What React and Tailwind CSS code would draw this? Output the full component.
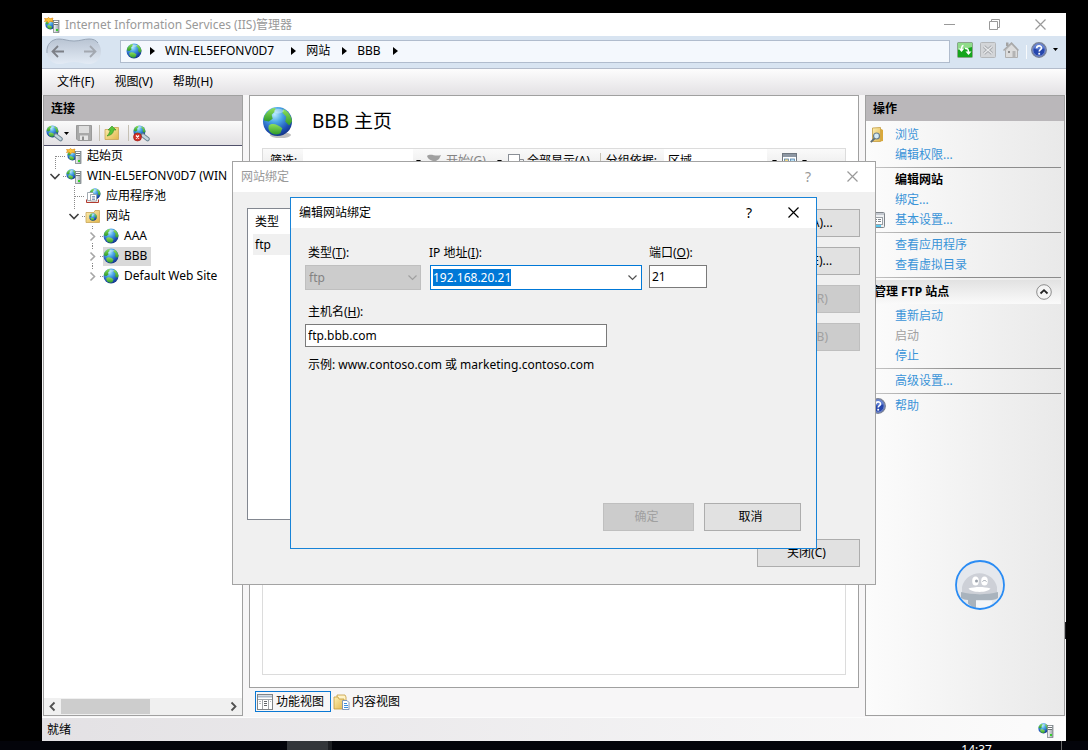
import React, { useEffect, useRef } from 'react';

const Gradients = () => (
  <svg width="0" height="0" className="absolute" aria-hidden="true">
    <defs>
      <radialGradient id="ocean" cx="0.4" cy="0.25" r="0.8">
        <stop offset="0" stopColor="#b8ecff" />
        <stop offset="0.35" stopColor="#4aa5e6" />
        <stop offset="0.75" stopColor="#1d4fb4" />
        <stop offset="1" stopColor="#12307e" />
      </radialGradient>
      <linearGradient id="land" x1="0" y1="0" x2="0" y2="1">
        <stop offset="0" stopColor="#8fe05c" />
        <stop offset="1" stopColor="#2f9a2a" />
      </linearGradient>
      <linearGradient id="folder" x1="0" y1="0" x2="1" y2="1">
        <stop offset="0" stopColor="#fdf0b4" />
        <stop offset="1" stopColor="#e2b64c" />
      </linearGradient>
      <linearGradient id="tower" x1="0" y1="0" x2="1" y2="0">
        <stop offset="0" stopColor="#f4f6f7" />
        <stop offset="1" stopColor="#9ba3a8" />
      </linearGradient>
      <linearGradient id="pill" x1="0" y1="0" x2="0" y2="1">
        <stop offset="0" stopColor="#b9c4d3" />
        <stop offset="1" stopColor="#e3ebf5" />
      </linearGradient>
    </defs>
  </svg>
);

const GlobeShape = () => (
  <>
    <circle cx="16" cy="16" r="15" fill="url(#ocean)" />
    <path d="M4 8C7 4 10 2 14 2l-1 4-3 3 1 4-4 3-5-1c0-3 0-5 2-7z" fill="url(#land)" />
    <path d="M22 3c5 2 9 8 9 13l-3 4-4-4 1-5-4-4z" fill="url(#land)" />
    <path d="M7 20c4-3 9-1 14 3l-2 5c-3 2-6 2-9 0-3-2-4-5-3-8z" fill="url(#land)" />
    <path d="M12 5c3-3 8-3 11 0-3 3-8 4-11 0z" fill="#fff" opacity="0.35" />
  </>
);

const Globe = ({ size = 16 }) => (
  <svg width={size} height={size} viewBox="0 0 32 32" className="shrink-0">
    <GlobeShape />
  </svg>
);

const BigGlobe = () => (
  <svg width="31" height="33" viewBox="0 0 32 34" className="shrink-0">
    <ellipse cx="19" cy="30" rx="11" ry="3" fill="#000" opacity="0.25" />
    <GlobeShape />
  </svg>
);

const ServerGlobe = ({ star }) => (
  <svg width="16" height="16" viewBox="0 0 16 16" className="shrink-0">
    <g transform={star ? 'translate(1 2) scale(0.34)' : 'translate(0 1) scale(0.34)'}>
      <GlobeShape />
    </g>
    {star && (
      <path d="M0.500 1.500l2.500 0.300L4.500 0.500l1.500 1.300L9 1l-0.800 2L9 5l-3-0.800L4.500 6 3.200 4 0.500 4.500l1-1.500z" fill="#fcc53a" stroke="#e08a12" strokeWidth="0.7" />
    )}
    <rect x="9.500" y="3.500" width="5.500" height="12" fill="url(#tower)" stroke="#70787d" strokeWidth="0.7" />
    <path d="M10 5.500h4M10 7.500h4" stroke="#6c7478" />
    <path d="M10 4.500h4M10 6.500h4" stroke="#fff" />
    <rect x="12" y="12" width="2" height="2" fill="#35d02c" />
  </svg>
);

const Folder = ({ children }) => (
  <svg width="16" height="16" viewBox="0 0 16 16" className="shrink-0">
    <path d="M1 4.500h8l1-2h4.500v12H1z" fill="url(#folder)" stroke="#c9a556" strokeWidth="0.8" />
    {children}
  </svg>
);

const SiteFolder = () => (
  <Folder>
    <g transform="translate(4 5) scale(0.25)">
      <GlobeShape />
    </g>
  </Folder>
);

const UpFolder = () => (
  <Folder>
    <path d="M3 11c2-2 3-4 3-6H4L8 1l4 4H9.500c0 3-2 5-6.500 6z" fill="#57c33a" stroke="#2b8d1c" strokeWidth="0.6" />
  </Folder>
);

const AppPool = () => (
  <svg width="16" height="16" viewBox="0 0 16 16" className="shrink-0">
    <g transform="translate(4 0) scale(0.37)">
      <GlobeShape />
    </g>
    <path d="M1.500 11.500v3h12v-3" fill="#f6e9e6" stroke="#b23a2e" />
    <path d="M2.500 4.500h5l1 1v7h-6z" fill="#fff" stroke="#8b96a0" strokeWidth="0.8" />
    <path d="M5.500 6.500h6v6.500h-6z" fill="#fff" stroke="#8b96a0" strokeWidth="0.8" />
    <path d="M7 8.500h3M7 10h3M7 11.500h3" stroke="#6f83ad" strokeWidth="0.8" />
  </svg>
);

const ConnectIcon = ({ stop }) => (
  <svg width="17" height="17" viewBox="0 0 17 17" className="shrink-0">
    <g transform="scale(0.4)">
      <GlobeShape />
    </g>
    <path d="M10 10.500l4.500 3.500" stroke="#6f8795" strokeWidth="4.500" strokeLinecap="round" />
    <path d="M10 10.500l4.500 3.500" stroke="#c3d5df" strokeWidth="2.500" strokeLinecap="round" />
    {stop && (
      <>
        <circle cx="4.500" cy="12" r="4" fill="#d32f26" stroke="#8f1813" strokeWidth="0.6" />
        <path d="M3 10.500l3 3M6 10.500l-3 3" stroke="#fff" strokeWidth="1.300" />
      </>
    )}
  </svg>
);

const SaveIcon = () => (
  <svg width="16" height="16" viewBox="0 0 16 16" className="shrink-0">
    <path d="M0.500 0.500h15v15H2l-1.500-1.500z" fill="#a9a9a9" stroke="#9a9a9a" />
    <path d="M3 1h10v7H3z" fill="#dedede" />
    <path d="M4 10.500h8V15H4z" fill="#e6e6e6" />
    <path d="M6 11.500h2V15H6z" fill="#8f8f8f" />
  </svg>
);

const HelpBall = () => (
  <svg width="16" height="16" viewBox="0 0 16 16" className="shrink-0">
    <circle cx="8" cy="8" r="7.300" fill="#2546ad" stroke="#7d8494" strokeWidth="1.300" />
    <circle cx="8" cy="8" r="6.200" fill="none" stroke="#a9b6dc" strokeWidth="0.7" />
    <path d="M2.500 6a5.800 5.800 0 0 1 11 0c-4 2-7 2-11 0z" fill="#7f9ce4" opacity="0.6" />
    <path d="M5.700 6.200c0-3 4.800-3 4.800-0.300 0 1.800-2.300 1.700-2.300 3.600" stroke="#fff" strokeWidth="1.600" fill="none" />
    <rect x="7.300" y="10.800" width="1.800" height="1.800" fill="#fff" />
  </svg>
);

const RefreshIcon = () => (
  <svg width="16" height="16" viewBox="0 0 16 16">
    <rect x="0.500" y="0.500" width="15" height="15" rx="1" fill="#15a51c" stroke="#8aa58b" />
    <path d="M1 1h14v4C10 7 6 5 1 8z" fill="#8fdc8a" />
    <path d="M6.500 3.500C4.800 3.500 4.500 5 4.500 8" stroke="#fff" strokeWidth="1.500" fill="none" />
    <path d="M1.500 6.500h6l-3 3.500z" fill="#fff" />
    <path d="M8 6.500c3-0.500 3.500 1 3.500 4" stroke="#fff" strokeWidth="1.500" fill="none" />
    <path d="M8.500 9.500h6l-3 3.500z" fill="#fff" />
  </svg>
);

const StopIcon = () => (
  <svg width="16" height="16" viewBox="0 0 16 16">
    <rect x="0.500" y="0.500" width="15" height="15" rx="1" fill="#d3d5d8" stroke="#b4b7ba" />
    <path d="M4 4.500l8 7M12 4.500l-8 7" stroke="#a7aaae" strokeWidth="3" />
    <path d="M4 4.500l8 7M12 4.500l-8 7" stroke="#e9eaec" strokeWidth="1.300" />
  </svg>
);

const HomeIcon = () => (
  <svg width="16" height="16" viewBox="0 0 16 16">
    <path d="M3 0.500h2.500V4H3z" fill="#a3a3a3" />
    <path d="M2.500 8v7.500h12V8L8.500 2z" fill="#dcdcdc" stroke="#b0b0b0" />
    <path d="M0.500 8.500L8.500 1l7 7.500" fill="none" stroke="#a9a9a9" strokeWidth="1.500" />
    <path d="M9.500 9h3v6.500h-3z" fill="#b4b4b4" />
    <path d="M5 9h2v2H5z" fill="#8e8e8e" />
  </svg>
);

const BrowseIcon = () => (
  <svg width="16" height="16" viewBox="0 0 16 16">
    <path d="M2.500 1l8-0.500v14h-8z" fill="url(#folder)" stroke="#c39a3e" strokeWidth="0.8" />
    <path d="M10.500 1.500l2.500 1.500v11l-2.500 0.500z" fill="#d9a93c" />
    <circle cx="6.500" cy="9" r="3" fill="#d5ebf7" stroke="#6a7f8c" strokeWidth="1.200" />
    <path d="M4.500 11.500L0.800 15.200" stroke="#5d6d78" strokeWidth="1.800" />
  </svg>
);

const SheetIcon = () => (
  <svg width="16" height="16" viewBox="0 0 16 16" className="shrink-0">
    <rect x="0.500" y="0.500" width="15" height="15" fill="#fff" stroke="#808386" />
    <path d="M1 2.500h14" stroke="#a9b8c8" strokeWidth="2" />
    <path d="M1 5.500h14M5.500 5v10M11.500 5v10" stroke="#a2a6aa" />
    <path d="M7 7.500h3M7 9.500h3M7 11.500h3" stroke="#63676b" />
    <path d="M2 7.500h2M2 9.500h2M13 7.500h1" stroke="#b6babe" />
  </svg>
);

const SettingsSheet = () => (
  <svg width="16" height="16" viewBox="0 0 16 16">
    <rect x="0.500" y="0.500" width="14" height="15" rx="1" fill="#eef0f2" stroke="#7f848a" />
    <path d="M1 2h13" stroke="#c4c9d0" strokeWidth="2" />
    <rect x="3.500" y="5.500" width="9" height="7" fill="#fff" stroke="#9aa0a6" />
    <path d="M5 7.500h2M8 7.500h3M5 9.500h2M8 9.500h3" stroke="#7f848a" />
    <path d="M4 14h7" stroke="#29bdee" strokeWidth="1.500" />
  </svg>
);

const ContentIcon = () => (
  <svg width="17" height="16" viewBox="0 0 17 16" className="shrink-0">
    <path d="M4 1h8l1 2v8H4z" fill="#fff3c8" stroke="#c39a3e" strokeWidth="0.8" />
    <path d="M1 3h4l1 2h5v10H1z" fill="url(#folder)" stroke="#c39a3e" strokeWidth="0.8" />
    <path d="M9.500 6.500h4.500l2 2v7H9.500z" fill="#fff" stroke="#7690b4" strokeWidth="0.9" />
    <path d="M11 9.500h3M11 11.500h4M11 13.500h4" stroke="#3a8ede" />
  </svg>
);

const GroupIcon = () => (
  <svg width="16" height="16" viewBox="0 0 16 16" className="shrink-0">
    <rect x="0.500" y="0.500" width="14" height="13" fill="#fff" stroke="#6f7780" />
    <path d="M1 2.500h13" stroke="#8d97a3" strokeWidth="3" />
    <rect x="2.500" y="6" width="4" height="4" fill="#f3d98a" stroke="#5784ac" strokeWidth="0.8" />
    <rect x="8.500" y="6" width="4" height="4" fill="#b9e0f5" stroke="#5784ac" strokeWidth="0.8" />
  </svg>
);

const Caret = () => (
  <svg width="5" height="3" viewBox="0 0 5 3" className="shrink-0">
    <path d="M0 0h5L2.500 3z" fill="#000" />
  </svg>
);

const Crumb = () => (
  <svg width="5" height="8" viewBox="0 0 5 8" className="shrink-0">
    <path d="M0 0l5 4-5 4z" fill="#000" />
  </svg>
);

const Cross = () => (
  <svg width="11" height="11" viewBox="0 0 11 11">
    <path d="M0.500 0.500l10 10M10.500 0.500l-10 10" stroke="currentColor" strokeWidth="1.200" />
  </svg>
);

const ChevronDown = () => (
  <svg width="9" height="6" viewBox="0 0 9 6">
    <path d="M0.500 0.500l4 4 4-4" fill="none" stroke="currentColor" strokeWidth="1.200" />
  </svg>
);

const NavPill = () => (
  <div className="flex w-[56px] shrink-0">
    <svg width="56" height="27" viewBox="0 0 56 27">
      <path
        d="M13 1c5 0 9 2 15 2s10-2 15-2c7 0 12 5 12 12.500S50 26 43 26c-5 0-9-2-15-2s-10 2-15 2C6 26 1 21 1 13.500S6 1 13 1z"
        fill="url(#pill)"
      />
      <path d="M1 15C0 6 6 1 13 1c5 0 9 2 15 2s10-2 15-2c4 0 7 1 9 4" fill="none" stroke="#98a5b6" />
      <path d="M18 13.500H7M12 8l-5.500 5.500L12 19" fill="none" stroke="#7d8087" strokeWidth="1.800" />
      <path d="M38 13.500h11M44 8l5.500 5.500L44 19" fill="none" stroke="#a3a8b0" strokeWidth="1.800" />
    </svg>
  </div>
);

const tree = [
  { label: '起始页', depth: 0, icon: <ServerGlobe star />, lines: 'M11.500 10v10M12 10.500h10' },
  { label: 'WIN-EL5EFONV0D7 (WIN', depth: 0, icon: <ServerGlobe />, lines: 'M11.500 0v4M19 10.500h3', state: 'open' },
  { label: '应用程序池', depth: 1, icon: <AppPool />, lines: 'M11.500 0v20M12 10.500h10' },
  { label: '网站', depth: 1, icon: <SiteFolder />, lines: 'M11.500 0v4M19 10.500h3', state: 'open' },
  { label: 'AAA', depth: 2, icon: <Globe />, lines: 'M11.500 0v4M11.500 17v3M19 10.500h3', state: 'closed' },
  { label: 'BBB', depth: 2, icon: <Globe />, lines: 'M11.500 0v4M11.500 17v3M19 10.500h3', state: 'closed', selected: true },
  { label: 'Default Web Site', depth: 2, icon: <Globe />, lines: 'M11.500 0v4M19 10.500h3', state: 'closed' },
];

const indents = ['pl-0', 'pl-[19px]', 'pl-[37px]'];

const TreeRow = ({ item }) => (
  <li className={`flex h-5 items-center whitespace-nowrap ${indents[item.depth]}`}>
    <svg width="22" height="20" viewBox="0 0 22 20" className="shrink-0">
      <path d={item.lines} stroke="#8a8a8a" strokeDasharray="1 1" />
      {item.state === 'open' && <path d="M6.500 8l4.500 4.500L15.500 8" fill="none" stroke="#404040" strokeWidth="1.600" />}
      {item.state === 'closed' && <path d="M9.500 6.500l4 4-4 4" fill="none" stroke="#a6a6a6" strokeWidth="1.600" />}
    </svg>
    <span className={`flex h-[19px] items-center gap-[5px] pr-1 ${item.selected ? 'bg-[#d9d9d9]' : ''}`}>
      {item.icon}
      {item.label}
    </span>
  </li>
);

const PanelTitle = ({ children }) => (
  <h2 className="flex h-[25px] shrink-0 items-center bg-[#bab7ba] px-[7px] font-bold">{children}</h2>
);

const ConnectionsPanel = () => (
  <aside className="flex w-[200px] shrink-0 flex-col overflow-hidden border border-[#a0a0a0] bg-white">
    <PanelTitle>连接</PanelTitle>
    <div className="flex h-[25px] shrink-0 items-center border-b border-[#50506a] bg-gradient-to-b from-[#fafafa] to-[#e3e1e4] pl-[2px]">
      <button aria-label="连接" className="flex items-center gap-px">
        <ConnectIcon />
        <Caret />
      </button>
      <button aria-label="保存" className="ml-[7px]"><SaveIcon /></button>
      <span className="ml-[7px] h-4 w-px bg-[#c5c0b4]" />
      <button aria-label="向上" className="ml-1"><UpFolder /></button>
      <span className="ml-2 h-4 w-px bg-[#c5c0b4]" />
      <button aria-label="断开" className="ml-1"><ConnectIcon stop /></button>
    </div>
    <ul className="flex-1 overflow-hidden">
      {tree.map((item) => (
        <TreeRow key={item.label} item={item} />
      ))}
    </ul>
    <div className="flex h-[17px] shrink-0 items-center bg-[#f0f0f0] text-[#505050]">
      <svg width="17" height="17" viewBox="0 0 17 17">
        <path d="M10.500 4.500l-4 4 4 4" fill="none" stroke="currentColor" strokeWidth="1.800" />
      </svg>
      <div className="h-[15px] flex-1">
        <div className="h-full w-[54%] bg-[#cdcdcd]" />
      </div>
      <svg width="17" height="17" viewBox="0 0 17 17">
        <path d="M6.500 4.500l4 4-4 4" fill="none" stroke="currentColor" strokeWidth="1.800" />
      </svg>
    </div>
  </aside>
);

const HomePanel = () => (
  <main className="flex min-w-0 flex-1 flex-col">
    <section className="flex flex-1 flex-col border border-[#a0a0a0] bg-white px-3 pb-3">
      <header className="flex h-[52px] shrink-0 items-center gap-[19px]">
        <BigGlobe />
        <h1 className="text-[19px]">BBB 主页</h1>
      </header>
      <div className="flex-1 border border-[#dcdcdc]">
        <div className="flex h-6 items-center overflow-hidden whitespace-nowrap bg-gradient-to-b from-[#fafafa] to-[#e8e8e8] pl-[7px]">
          <span className="w-[33px]">筛选:</span>
          <span className="h-full w-[110px] bg-white" />
          <span className="flex w-[10px] justify-center"><Caret /></span>
          <button className="ml-1 flex items-center gap-[5px] text-[#838383]">
            <svg width="14" height="14" viewBox="0 0 14 14">
              <path d="M0 2c4-3 8 1 14-1l-2 4-3 2v5l-3-2V7C3 6 1 5 0 2z" fill="#a0a0a0" />
            </svg>
            开始(G)
          </button>
          <span className="ml-[11px]"><Caret /></span>
          <button className="ml-[6px] flex items-center gap-[3px]">
            <svg width="16" height="14" viewBox="0 0 16 14">
              <rect x="0.500" y="0.500" width="11" height="9" fill="#fff" stroke="#8a8f96" />
              <path d="M12 5.500h3.500v8h-11v-3" fill="none" stroke="#8a8f96" />
            </svg>
            全部显示(A)
          </button>
          <span className="ml-[10px] mr-[5px] h-4 w-px bg-[#c5c0b4]" />
          <span>分组依据:</span>
          <span className="ml-[7px] flex h-full w-[103px] items-center bg-white pl-1">区域</span>
          <span className="flex w-[15px] justify-center"><Caret /></span>
          <span className="flex items-center gap-1">
            <GroupIcon />
            <Caret />
          </span>
        </div>
      </div>
    </section>
    <div className="flex h-7 shrink-0 items-center px-[6px] pb-px">
      <button className="flex h-[21px] items-center gap-[3px] border border-[#0a78d4] px-px pr-[6px]">
        <SheetIcon />
        功能视图
      </button>
      <button className="ml-[2px] flex h-[21px] items-center gap-[2px]">
        <ContentIcon />
        内容视图
      </button>
    </div>
  </main>
);

const Action = ({ icon, children }) => (
  <a href="#" className="flex h-5 items-center text-[#3a94d8]">
    <span className="flex w-[25px] shrink-0">{icon}</span>
    {children}
  </a>
);

const Rule = () => <hr className="-ml-1 mr-[3px] my-[2px] h-px border-0 bg-gradient-to-r from-[#c9c9c9] via-[#8c8c8c] to-[#8c8c8c]" />;

const ActionsPanel = () => (
  <aside className="flex w-[200px] shrink-0 flex-col border border-[#a0a0a0] bg-gradient-to-r from-[#fcfcfc] to-[#e9e9e9]">
    <PanelTitle>操作</PanelTitle>
    <div className="pt-1 pl-1">
      <Action icon={<BrowseIcon />}>浏览</Action>
      <Action>编辑权限...</Action>
      <Rule />
      <h3 className="flex h-5 items-center pl-[25px] font-bold">编辑网站</h3>
      <Action>绑定...</Action>
      <Action icon={<SettingsSheet />}>基本设置...</Action>
      <Rule />
      <Action>查看应用程序</Action>
      <Action>查看虚拟目录</Action>
      <Rule />
      <h3 className="mb-[2px] mr-[3px] flex h-6 items-center justify-between bg-gradient-to-b from-[#e2e2e2] to-[#fafafa] pl-1 pr-[9px] font-bold">
        管理 FTP 站点
        <button aria-label="折叠">
          <svg width="16" height="16" viewBox="0 0 16 16">
            <circle cx="8" cy="8" r="7.300" fill="#f4f4f4" stroke="#8c8c8c" />
            <path d="M4.500 9.500L8 6.200l3.500 3.300" fill="none" stroke="#222" strokeWidth="1.800" />
          </svg>
        </button>
      </h3>
      <Action>重新启动</Action>
      <span className="flex h-5 items-center pl-[25px] text-[#a0a0a0]">启动</span>
      <Action>停止</Action>
      <Rule />
      <Action>高级设置...</Action>
      <Rule />
      <Action icon={<HelpBall />}>帮助</Action>
    </div>
  </aside>
);

const dialogButton =
  'flex h-7 items-center justify-center border border-[#adadad] bg-[#e1e1e1] disabled:border-[#bfbfbf] disabled:bg-[#cccccc] disabled:text-[#a0a0a0]';

const DialogTitle = ({ children }) => (
  <div className="flex h-[30px] shrink-0 items-center bg-white pb-px pl-2 pr-[17px]">
    <span className="flex-1">{children}</span>
    <button aria-label="帮助" className="mr-9 text-sm">?</button>
    <button aria-label="关闭"><Cross /></button>
  </div>
);

const BindingsDialog = () => (
  <div className="absolute left-[190px] top-[148px] flex h-[424px] w-[644px] flex-col border border-[#a3a3a3] bg-[#f0f0f0]">
    <div className="text-[#999999]">
      <DialogTitle>网站绑定</DialogTitle>
    </div>
    <div className="flex flex-1 gap-[15px] pl-[14px] pr-[15px] pt-4">
      <div className="h-[312px] flex-1 border border-[#828790] bg-white pl-[5px]">
        <table className="w-full text-left">
          <thead>
            <tr className="h-[25px]"><th className="pl-[2px] font-normal">类型</th></tr>
          </thead>
          <tbody>
            <tr className="h-[21px] bg-[#f0f0f0]"><td className="pl-[2px]">ftp</td></tr>
          </tbody>
        </table>
      </div>
      <div className="flex w-[103px] flex-col gap-[10px] pt-px">
        <button className={dialogButton}>添加(A)...</button>
        <button className={dialogButton}>编辑(E)...</button>
        <button className={dialogButton} disabled>删除(R)</button>
        <button className={dialogButton} disabled>浏览(B)</button>
      </div>
    </div>
    <div className="flex justify-end pb-[17px] pr-[15px]">
      <button className={`${dialogButton} w-[103px] pr-1`}>关闭(C)</button>
    </div>
  </div>
);

const EditBindingDialog = () => {
  const address = useRef(null);

  useEffect(() => {
    address.current.focus();
    address.current.select();
  }, []);

  return (
    <div className="absolute left-[248px] top-[184px] flex h-[352px] w-[527px] flex-col border border-[#1883d7] bg-[#f0f0f0]">
      <DialogTitle>编辑网站绑定</DialogTitle>
      <div className="flex flex-1 flex-col pl-[14px] pr-[15px] pt-4">
        <div className="flex items-start">
          <div className="w-[116px]">
            <label htmlFor="type" className="block h-[21px] pl-[3px] leading-[18px]">类型(<u>T</u>):</label>
            <div className="relative">
              <select id="type" disabled className="block h-[25px] w-full appearance-none border border-[#bfbfbf] bg-[#cccccc] px-[3px] text-[#838383] opacity-100">
                <option>ftp</option>
              </select>
              <span className="pointer-events-none absolute right-1 top-[10px] text-[#a0a0a0]"><ChevronDown /></span>
            </div>
          </div>
          <div className="ml-2 w-[213px]">
            <label htmlFor="address" className="block h-[21px] leading-[18px]">IP 地址(<u>I</u>):</label>
            <div className="ml-px flex h-[25px] items-center border border-[#0078d7] bg-white">
              <input
                id="address"
                ref={address}
                defaultValue="192.168.20.21"
                className="h-[21px] min-w-0 flex-1 pl-[2px] outline-none selection:bg-[#0078d7] selection:text-white"
              />
              <button aria-label="选择地址" className="px-1 text-[#505050]"><ChevronDown /></button>
            </div>
          </div>
          <div className="ml-[7px] w-[58px]">
            <label htmlFor="port" className="block h-[21px] whitespace-nowrap leading-[18px]">端口(<u>O</u>):</label>
            <input id="port" defaultValue="21" className="block h-[23px] w-full border border-[#7a7a7a] bg-white px-[2px]" />
          </div>
        </div>
        <label htmlFor="host" className="mt-[13px] block h-[21px] pl-[3px] leading-[18px]">主机名(<u>H</u>):</label>
        <input id="host" defaultValue="ftp.bbb.com" className="block h-[23px] w-[302px] border border-[#7a7a7a] bg-white px-[2px]" />
        <p className="mt-[9px] pl-[3px] leading-[18px]">示例: www.contoso.com 或 marketing.contoso.com</p>
        <div className="mt-auto flex justify-end gap-[10px] pb-[17px]">
          <button className={`${dialogButton} w-[91px] pr-1`} disabled>确定</button>
          <button className={`${dialogButton} w-[97px] pr-1`}>取消</button>
        </div>
      </div>
    </div>
  );
};

const Assistant = () => (
  <svg width="50" height="50" viewBox="0 0 50 50" className="absolute right-[61px] top-[547px]">
    <circle cx="25" cy="25" r="24" fill="#e5e8ed" />
    <path d="M7 34V27a18 18 0 0 1 35 0v7z" fill="#cdd0d7" />
    <path d="M6 32c12 3 26 3 37 0v6c-3 2-6 2-8 2H13c-3 0-5-1-7-2z" fill="#a9b3bd" />
    <path d="M13 39h8v9.500c-3-1-6-3-8-5z" fill="#a9b3bd" />
    <path d="M21 41h16v3c-4 4-10 5-16 4.500z" fill="#f5f6f8" />
    <ellipse cx="20.500" cy="21" rx="3.300" ry="4.500" fill="#fff" />
    <ellipse cx="29.500" cy="21" rx="3.300" ry="4.500" fill="#fff" />
    <circle cx="21.500" cy="21" r="1.500" fill="#9aa1ab" />
    <path d="M27.500 21.500c1-1.300 3-1.300 4 0" fill="none" stroke="#9aa1ab" />
    <path d="M13.500 28.500c7-2 15-2 22 0-3 4.500-19 4.500-22 0z" fill="#fff" />
    <circle cx="25" cy="25" r="24" fill="none" stroke="#2a8cf4" strokeWidth="1.800" />
  </svg>
);

const AddressBar = () => (
  <div className="flex h-[33px] shrink-0 items-center border-b border-[#b3bccb] bg-[#d8e4f1] pb-px pl-1 pr-2">
    <NavPill />
    <nav className="ml-[18px] flex h-[23px] flex-1 items-center border border-[#b0bccd] bg-[#f4f8fd] pb-px pl-[5px]">
      <Globe />
      <span className="ml-2"><Crumb /></span>
      <span className="ml-[10px]">WIN-EL5EFONV0D7</span>
      <span className="ml-[17px]"><Crumb /></span>
      <span className="ml-[10px]">网站</span>
      <span className="ml-3"><Crumb /></span>
      <span className="ml-[10px]">BBB</span>
      <span className="ml-3"><Crumb /></span>
    </nav>
    <div className="ml-[7px] flex items-center gap-[7px] pb-1">
      <button aria-label="刷新"><RefreshIcon /></button>
      <button aria-label="停止" disabled><StopIcon /></button>
      <button aria-label="主页" disabled><HomeIcon /></button>
    </div>
    <span className="ml-[7px] h-[14px] w-px bg-[#f8fafc]" />
    <button aria-label="帮助" className="ml-1 flex items-center gap-[6px] pb-1">
      <HelpBall />
      <Caret />
    </button>
  </div>
);

const App = () => {
  return (
    <div className="flex h-screen flex-col overflow-hidden bg-black pt-[13px] font-['Noto_Sans','Noto_Sans_CJK_SC',sans-serif] text-xs text-black">
      <Gradients />
      <div className="relative ml-[42px] mr-[22px] flex min-h-0 flex-1 flex-col bg-[#f7f6f7]">
        <div className="flex h-[23px] shrink-0 items-center bg-white pl-[2px] pr-5 text-[#999999]">
          <ServerGlobe star />
          <span className="ml-[5px] flex-1">Internet Information Services (IIS)管理器</span>
          <button aria-label="最小化">
            <svg width="11" height="11" viewBox="0 0 11 11"><path d="M0 5.500h11" stroke="currentColor" /></svg>
          </button>
          <button aria-label="还原" className="ml-[34px]">
            <svg width="11" height="11" viewBox="0 0 11 11">
              <path d="M0.500 2.500h8v8h-8zM2.500 2V0.500h8v8H9" fill="none" stroke="currentColor" />
            </svg>
          </button>
          <button aria-label="关闭" className="ml-[35px]"><Cross /></button>
        </div>
        <AddressBar />
        <div className="flex h-[26px] shrink-0 items-center gap-5 bg-gradient-to-b from-[#fdfdfd] to-[#e3e1e4] px-[15px]">
          <button>文件(F)</button>
          <button>视图(V)</button>
          <button>帮助(H)</button>
        </div>
        <div className="flex min-h-0 flex-1 gap-[6px] px-px pb-px">
          <ConnectionsPanel />
          <HomePanel />
          <ActionsPanel />
        </div>
        <footer className="flex h-6 shrink-0 items-center justify-between border-t border-[#fcfcfc] bg-gradient-to-r from-[#e3e1e4] to-[#fcfcfc] pl-[5px] pr-3">
          就绪
          <ServerGlobe />
        </footer>
        <BindingsDialog />
        <EditBindingDialog />
        <Assistant />
        <span className="absolute right-0 top-[609px] h-[17px] w-px bg-[#1c1c1e]" />
      </div>
      <div className="flex h-[9px] shrink-0 justify-between overflow-hidden bg-[#03040a] text-white">
        <div className="ml-[287px] h-full w-[45px] border-r-4 border-[#1c1e22] bg-[#33363a]" />
        <div className="mr-[26px] flex h-full border-r border-[#6a6a6a] pr-[69px]">
          <span className="pt-px">14:37</span>
        </div>
      </div>
    </div>
  );
};

export default App;
